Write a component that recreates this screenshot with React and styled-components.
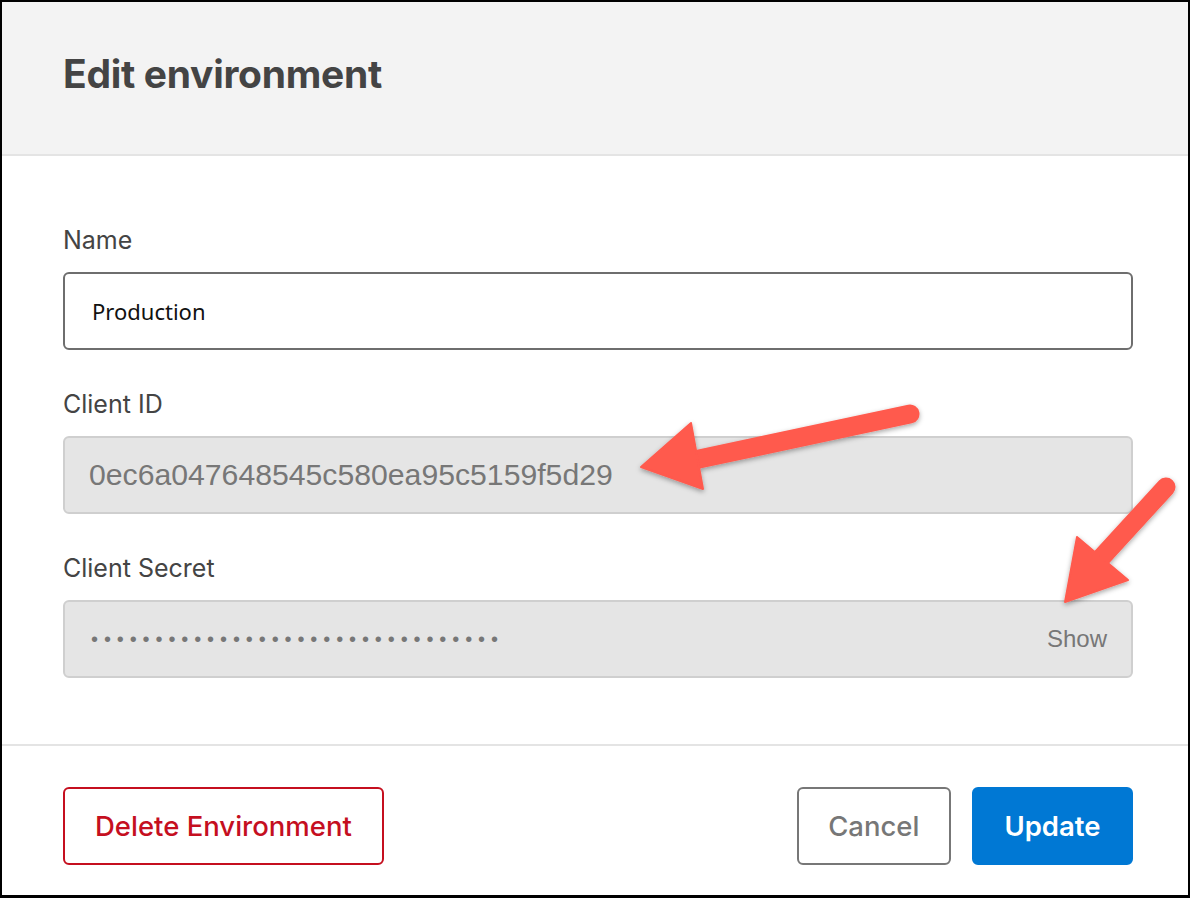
import React from 'react'
import styled, { createGlobalStyle } from 'styled-components'

const Global = createGlobalStyle`
  html, body { margin: 0; padding: 0; background: #fff; }
  * { box-sizing: border-box; }
`

const Frame = styled.div`
  position: relative;
  width: 1190px;
  height: 898px;
  border: 2px solid #000;
  border-bottom-width: 3px;
  display: flex;
  flex-direction: column;
  font-family: Inter, "Liberation Sans", sans-serif;
  color: #444;
`

const Header = styled.header`
  height: 154px;
  background: #f3f3f3;
  border-bottom: 2px solid #e4e4e4;
  padding: 0 55px 10px 61px;
  display: flex;
  align-items: center;
`

const Title = styled.h1`
  margin: 0;
  font-size: 39px;
  font-weight: 700;
  letter-spacing: -0.3px;
  color: #444;
`

const Body = styled.div`
  padding: 68px 55px 66px 61px;
  display: flex;
  flex-direction: column;
  gap: 38px;
  border-bottom: 2px solid #e4e4e4;
`

const Field = styled.div`
  display: flex;
  flex-direction: column;
  gap: 16px;
`

const Label = styled.label`
  font-size: 25px;
  line-height: 32px;
  color: #444;
`

const Input = styled.div`
  height: 78px;
  border-radius: 6px;
  display: flex;
  align-items: center;
  justify-content: space-between;
  border: ${p => (p.$disabled ? '2px solid #cfcfcf' : '2px solid #6e6e6e')};
  background: ${p => (p.$disabled ? '#e5e5e5' : '#fff')};
  padding: 0 24px 0 ${p => (p.$disabled ? '24px' : '27px')};
`

const PlainValue = styled.span`
  font-family: "Noto Sans", sans-serif;
  font-size: 22px;
  color: #111;
`

const MutedValue = styled.span`
  font-family: "Liberation Sans", Arial, sans-serif;
  font-size: 30.2px;
  color: #777;
`

const Dots = styled.span`
  font-family: "Liberation Sans", Arial, sans-serif;
  font-size: 20px;
  letter-spacing: 5.9px;
  color: #777;
  padding-left: 2px;
`

const ShowLink = styled.span`
  font-family: "Liberation Sans", Arial, sans-serif;
  font-size: 24px;
  color: #777;
`

const Footer = styled.footer`
  flex: 1;
  padding: 10px 55px 0 61px;
  display: flex;
  align-items: center;
  justify-content: space-between;
`

const Actions = styled.div`
  display: flex;
  gap: 21px;
`

const Button = styled.button`
  height: 78px;
  padding: 0 ${p => p.$pad || '30px'};
  border-radius: 6px;
  font-family: Inter, "Liberation Sans", sans-serif;
  font-size: 27.5px;
  font-weight: ${p => (p.$primary ? 600 : 500)};
  cursor: pointer;
  background: ${p => (p.$primary ? '#0078d4' : '#fff')};
  color: ${p => p.$color};
  border: 2px solid ${p => p.$border};
`

const Overlay = styled.svg`
  position: absolute;
  left: -2px;
  top: -2px;
  pointer-events: none;
`

const Arrows = () => (
  <Overlay width="1190" height="898" viewBox="0 0 1190 898">
    <defs>
      <filter id="sh" x="-20%" y="-20%" width="140%" height="140%">
        <feDropShadow dx="0" dy="2" stdDeviation="2.5" floodColor="#000" floodOpacity="0.35" />
      </filter>
    </defs>
    <g fill="#ff5a4e" stroke="#ff5a4e" filter="url(#sh)">
      <line x1="910" y1="414" x2="685" y2="462" strokeWidth="19" strokeLinecap="round" />
      <polygon points="641,467 691,423 703,489" strokeWidth="2" strokeLinejoin="round" />
      <line x1="1166" y1="487" x2="1090" y2="570" strokeWidth="19" strokeLinecap="round" />
      <polygon points="1065,602 1077,537 1128,580" strokeWidth="2" strokeLinejoin="round" />
    </g>
  </Overlay>
)

export default function App() {
  return (
    <>
      <Global />
      <Frame>
        <Header>
          <Title>Edit environment</Title>
        </Header>
        <Body>
          <Field>
            <Label>Name</Label>
            <Input>
              <PlainValue>Production</PlainValue>
            </Input>
          </Field>
          <Field>
            <Label>Client ID</Label>
            <Input $disabled>
              <MutedValue>0ec6a047648545c580ea95c5159f5d29</MutedValue>
            </Input>
          </Field>
          <Field>
            <Label>Client Secret</Label>
            <Input $disabled>
              <Dots>{'•'.repeat(32)}</Dots>
              <ShowLink>Show</ShowLink>
            </Input>
          </Field>
        </Body>
        <Footer>
          <Button $color="#c50f1f" $border="#c50f1f" $pad="30px">Delete Environment</Button>
          <Actions>
            <Button $color="#777" $border="#777" $pad="29.5px">Cancel</Button>
            <Button $primary $color="#fff" $border="#0078d4" $pad="30.5px">Update</Button>
          </Actions>
        </Footer>
        <Arrows />
      </Frame>
    </>
  )
}
